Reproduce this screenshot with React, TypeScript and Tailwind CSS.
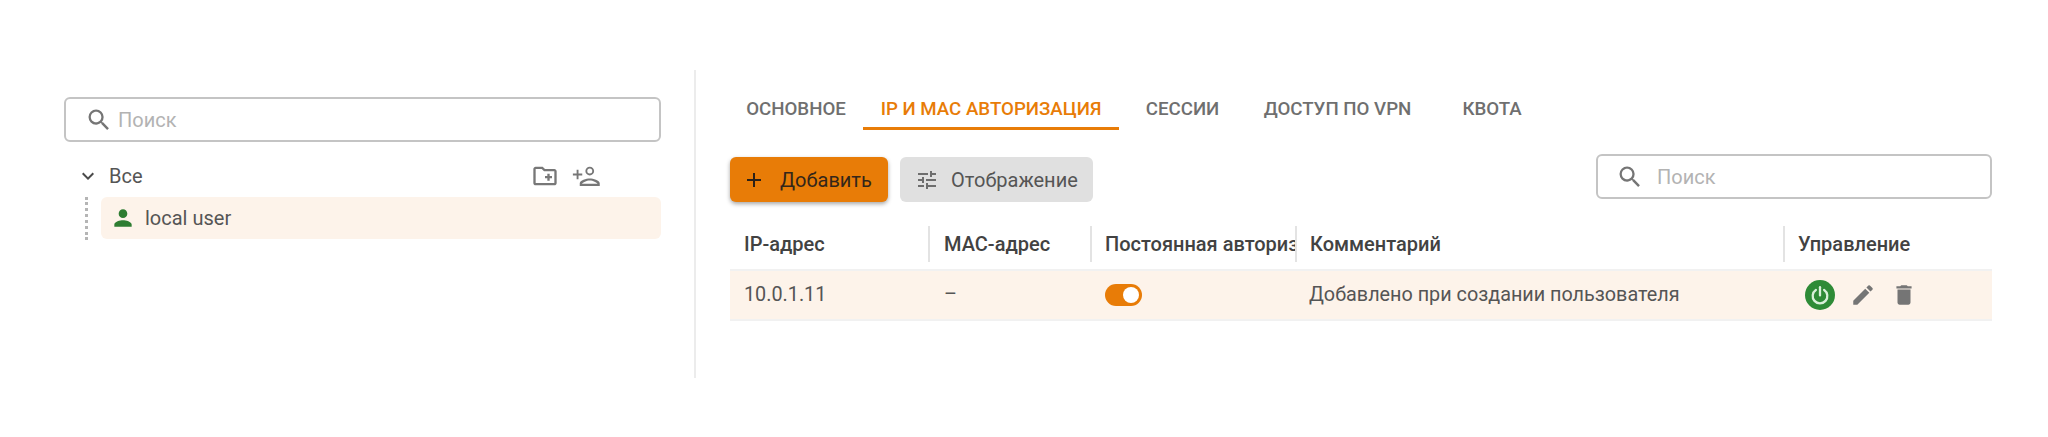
import React from "react";

const font = { fontFamily: "Roboto, sans-serif" };

function Search({ cls, gap }: { cls: string; gap: string }) {
  return (
    <div className={`flex items-center rounded-md border-2 border-[#c4c4c4] bg-white ${cls}`}>
      <svg width="28" height="28" viewBox="0 0 24 24" fill="#757575">
        <path d="M15.5 14h-.79l-.28-.27A6.471 6.471 0 0 0 16 9.5 6.5 6.5 0 1 0 9.5 16c1.61 0 3.09-.59 4.23-1.57l.27.28v.79l5 4.99L20.49 19l-4.99-5zm-6 0C7.01 14 5 11.99 5 9.5S7.01 5 9.5 5 14 7.01 14 9.5 11.99 14 9.5 14z" />
      </svg>
      <span className={`text-[20px] text-[#b3b3b3] ${gap}`}>Поиск</span>
    </div>
  );
}

function Tab({ label, active, cls }: { label: string; active?: boolean; cls: string }) {
  return (
    <div className={`h-[41px] flex items-center justify-center whitespace-nowrap text-[18.7px] font-medium uppercase ${active ? "text-[#e87c07] border-b-[3px] border-[#e87c07] pt-[3px]" : "text-[#6f6f6f]"} ${cls}`}>
      {label}
    </div>
  );
}

function Head({ label, cls }: { label: string; cls: string }) {
  return (
    <div className={`h-[36px] flex items-center overflow-hidden whitespace-nowrap border-r-2 border-[#e3e3e3] text-[20px] font-medium text-[#424242] ${cls}`}>
      {label}
    </div>
  );
}

export default function App() {
  return (
    <div className="w-[2048px] h-[437px] bg-white flex pt-[70px] overflow-hidden" style={font}>
      <div className="w-[696px] h-[308px] border-r-2 border-[#ececec] pl-[64px] pr-[33px] pt-[27px]">
        <Search cls="h-[45px] pl-[19px]" gap="ml-[5px]" />
        <div className="h-[55px] flex items-center pl-[12px] pt-[12px]">
          <svg width="24" height="24" viewBox="0 0 24 24" fill="#4a4a4a">
            <path d="M7.41 8.59 12 13.17l4.59-4.58L18 10l-6 6-6-6z" />
          </svg>
          <span className="ml-[9px] text-[20px] text-[#555]">Все</span>
          <div className="ml-auto mr-[60px] flex items-center gap-[12px]">
            <svg width="28" height="28" viewBox="0 0 24 24" fill="#777">
              <path d="M20 6h-8l-2-2H4c-1.1 0-2 .9-2 2v12c0 1.1.9 2 2 2h16c1.1 0 2-.9 2-2V8c0-1.1-.9-2-2-2zm0 12H4V6h5.17l2 2H20v10zm-8-4h2v2h2v-2h2v-2h-2v-2h-2v2h-2v2z" />
            </svg>
            <svg width="30" height="30" viewBox="0 0 24 24" fill="#777">
              <path d="M15 6a2 2 0 1 1 0 4 2 2 0 0 1 0-4m0-1.5a3.5 3.5 0 1 0 0 7 3.5 3.5 0 0 0 0-7zM15 14c-2.67 0-8 1.34-8 4v2h16v-2c0-2.66-5.33-4-8-4zm-6.2 4.2c.6-1 3.600-2.700 6.200-2.700s5.600 1.700 6.200 2.700zM6 10V7H4.500v3h-3v1.500h3v3H6v-3h3V10z" />
            </svg>
          </div>
        </div>
        <div className="flex">
          <div className="w-[3px] h-[43px] ml-[21px] border-l-[3px] border-dotted border-[#b5b5b5]" />
          <div className="ml-[13px] flex-1 h-[42px] rounded-md bg-[#fdf3ea] flex items-center pl-[9px]">
            <svg width="26" height="26" viewBox="0 0 24 24" fill="#2e7d32">
              <path d="M12 12c2.210 0 4-1.790 4-4s-1.790-4-4-4-4 1.790-4 4 1.790 4 4 4zm0 2c-2.670 0-8 1.340-8 4v2h16v-2c0-2.660-5.330-4-8-4z" />
            </svg>
            <span className="ml-[9px] text-[20px] text-[#555]">local user</span>
          </div>
        </div>
      </div>

      <div className="flex-1 pl-[34px] pr-[56px] pt-[19px] min-w-0">
        <div className="flex pl-[16px]">
          <Tab label="Основное" cls="w-[100px]" />
          <Tab label="IP и MAC авторизация" active cls="ml-[17px] w-[256px]" />
          <Tab label="Сессии" cls="ml-[26px] w-[75px]" />
          <Tab label="Доступ по VPN" cls="ml-[43px] w-[149px]" />
          <Tab label="Квота" cls="ml-[51px] w-[58px]" />
        </div>
        <div className="mt-[27px] flex items-center">
          <div className="w-[158px] h-[45px] rounded-md bg-[#e87c07] shadow-[0_2px_4px_rgba(0,0,0,0.35)] flex items-center pl-[12px]">
            <svg width="24" height="24" viewBox="0 0 24 24" fill="#2b2118">
              <path d="M19 13h-6v6h-2v-6H5v-2h6V5h2v6h6v2z" />
            </svg>
            <span className="ml-[14px] text-[20px] text-[#33261a]">Добавить</span>
          </div>
          <div className="ml-[12px] w-[193px] h-[45px] rounded-md bg-[#e0e0e0] flex items-center pl-[15px]">
            <svg width="24" height="24" viewBox="0 0 24 24" fill="#6e6e6e">
              <path d="M3 17v2h6v-2H3zM3 5v2h10V5H3zm10 16v-2h8v-2h-8v-2h-2v6h2zM7 9v2H3v2h4v2h2V9H7zm14 4v-2H11v2h10zm-6-4h2V7h4V5h-4V3h-2v6z" />
            </svg>
            <span className="ml-[12px] text-[20px] text-[#555]">Отображение</span>
          </div>
          <Search cls="ml-auto w-[396px] h-[45px] pl-[18px] -mt-[6px]" gap="ml-[13px]" />
        </div>
        <div className="mt-[24px] flex items-center pl-[14px]">
          <Head label="IP-адрес" cls="w-[186px]" />
          <Head label="MAC-адрес" cls="w-[162px] pl-[14px]" />
          <Head label="Постоянная авторизация" cls="w-[205px] pl-[13px]" />
          <Head label="Комментарий" cls="w-[488px] pl-[13px]" />
          <div className="pl-[13px] text-[20px] font-medium text-[#424242] whitespace-nowrap">Управление</div>
        </div>
        <div className="mt-[7px] h-[52px] bg-[#fdf3ea] border-y-2 border-[#f1f1f1] flex items-center text-[19.8px] text-[#555]">
          <div className="w-[200px] pl-[14px]">10.0.1.11</div>
          <div className="w-[161px] pl-[14px]">–</div>
          <div className="w-[205px] pl-[14px]">
            <div className="w-[37px] h-[22px] rounded-full bg-[#e87c07] flex items-center justify-end pr-[3px]">
              <div className="w-[16px] h-[16px] rounded-full bg-white" />
            </div>
          </div>
          <div className="w-[488px] pl-[13px] whitespace-nowrap">Добавлено при создании пользователя</div>
          <div className="flex items-center pl-[21px] gap-[15px]">
            <div className="w-[30px] h-[30px] rounded-full bg-[#2e8b37] flex items-center justify-center">
              <svg width="22" height="22" viewBox="0 0 24 24" fill="none" stroke="#d9f0da" strokeWidth="2.500" strokeLinecap="round">
                <path d="M12 3.500v9" />
                <path d="M7.500 6.500a8 8 0 1 0 9 0" />
              </svg>
            </div>
            <svg width="26" height="26" viewBox="0 0 24 24" fill="#757575">
              <path d="M3 17.250V21h3.750L17.810 9.940l-3.750-3.750L3 17.250zM20.710 7.040a1 1 0 0 0 0-1.410l-2.340-2.340a1 1 0 0 0-1.410 0l-1.830 1.830 3.750 3.750 1.830-1.830z" />
            </svg>
            <svg width="26" height="26" viewBox="0 0 24 24" fill="#757575">
              <path d="M6 19c0 1.100.9 2 2 2h8c1.100 0 2-.9 2-2V7H6v12zM19 4h-3.500l-1-1h-5l-1 1H5v2h14V4z" />
            </svg>
          </div>
        </div>
      </div>
    </div>
  );
}
